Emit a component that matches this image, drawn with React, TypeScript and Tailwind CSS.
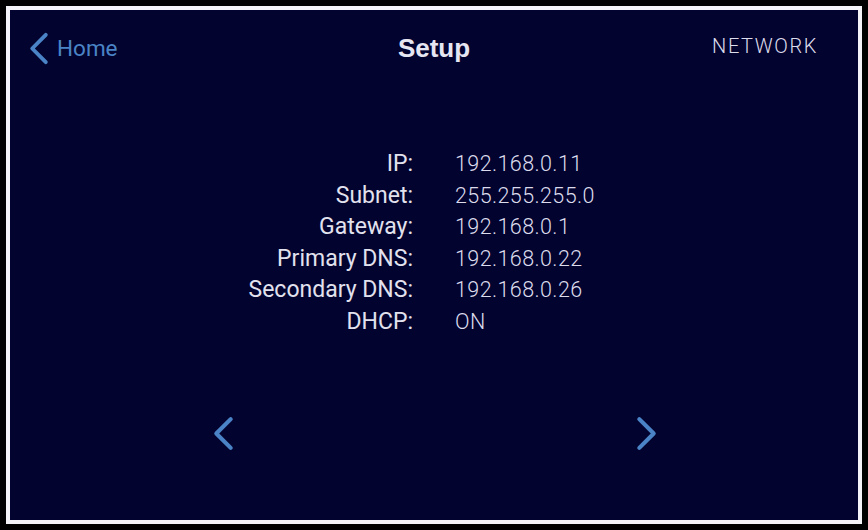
const rows = [
  { label: 'IP:', value: '192.168.0.11' },
  { label: 'Subnet:', value: '255.255.255.0' },
  { label: 'Gateway:', value: '192.168.0.1' },
  { label: 'Primary DNS:', value: '192.168.0.22' },
  { label: 'Secondary DNS:', value: '192.168.0.26' },
  { label: 'DHCP:', value: 'ON' },
];

function Chevron({ dir, className }: { dir: 'left' | 'right'; className?: string }) {
  return (
    <svg viewBox="0 0 20 34" className={className} fill="none" stroke="currentColor" strokeWidth={4} strokeLinecap="round" strokeLinejoin="round">
      {dir === 'left' ? <polyline points="17,3 3,17 17,31" /> : <polyline points="3,3 17,17 3,31" />}
    </svg>
  );
}

export default function App() {
  return (
    <div className="h-[530px] w-[868px] bg-black p-[6px] font-['Roboto',sans-serif]">
      <div className="flex h-full w-full flex-col border-4 border-[#f4f4f8] bg-[#03032f]">
        {/* HEADER */}
        <div className="relative flex h-[76px] items-center justify-between pl-[19px] pr-[40px]">
          <div className="flex items-center gap-[8px] text-[#4a83c6]">
            <Chevron dir="left" className="h-[33px] w-[20px]" />
            <span className="pt-[1px] text-[22.5px]">Home</span>
          </div>
          <div className="absolute left-1/2 top-[19px] -translate-x-1/2 font-['Liberation_Sans',sans-serif] text-[26px] font-bold text-[#e6e6f2]">
            Setup
          </div>
          <span className="mb-[4px] text-[20px] font-light tracking-[1.6px] text-[#dcdcec]">NETWORK</span>
        </div>

        {/* TABLE */}
        <div className="mt-[62px] grid grid-cols-[403px_1fr] gap-x-[42px] leading-[31.6px]">
          {rows.map((row) => (
            <div key={row.label} className="contents">
              <div className="text-right text-[23px] text-[#e2e2ee]">{row.label}</div>
              <div className="text-[21.5px] font-light tracking-[0.4px] text-[#dcdcec]">{row.value}</div>
            </div>
          ))}
        </div>

        {/* PAGER */}
        <div className="mt-[78px] flex justify-between pl-[203px] pr-[201px] text-[#4a83c6]">
          <Chevron dir="left" className="h-[35px] w-[21px]" />
          <Chevron dir="right" className="h-[35px] w-[21px]" />
        </div>
      </div>
    </div>
  );
}
